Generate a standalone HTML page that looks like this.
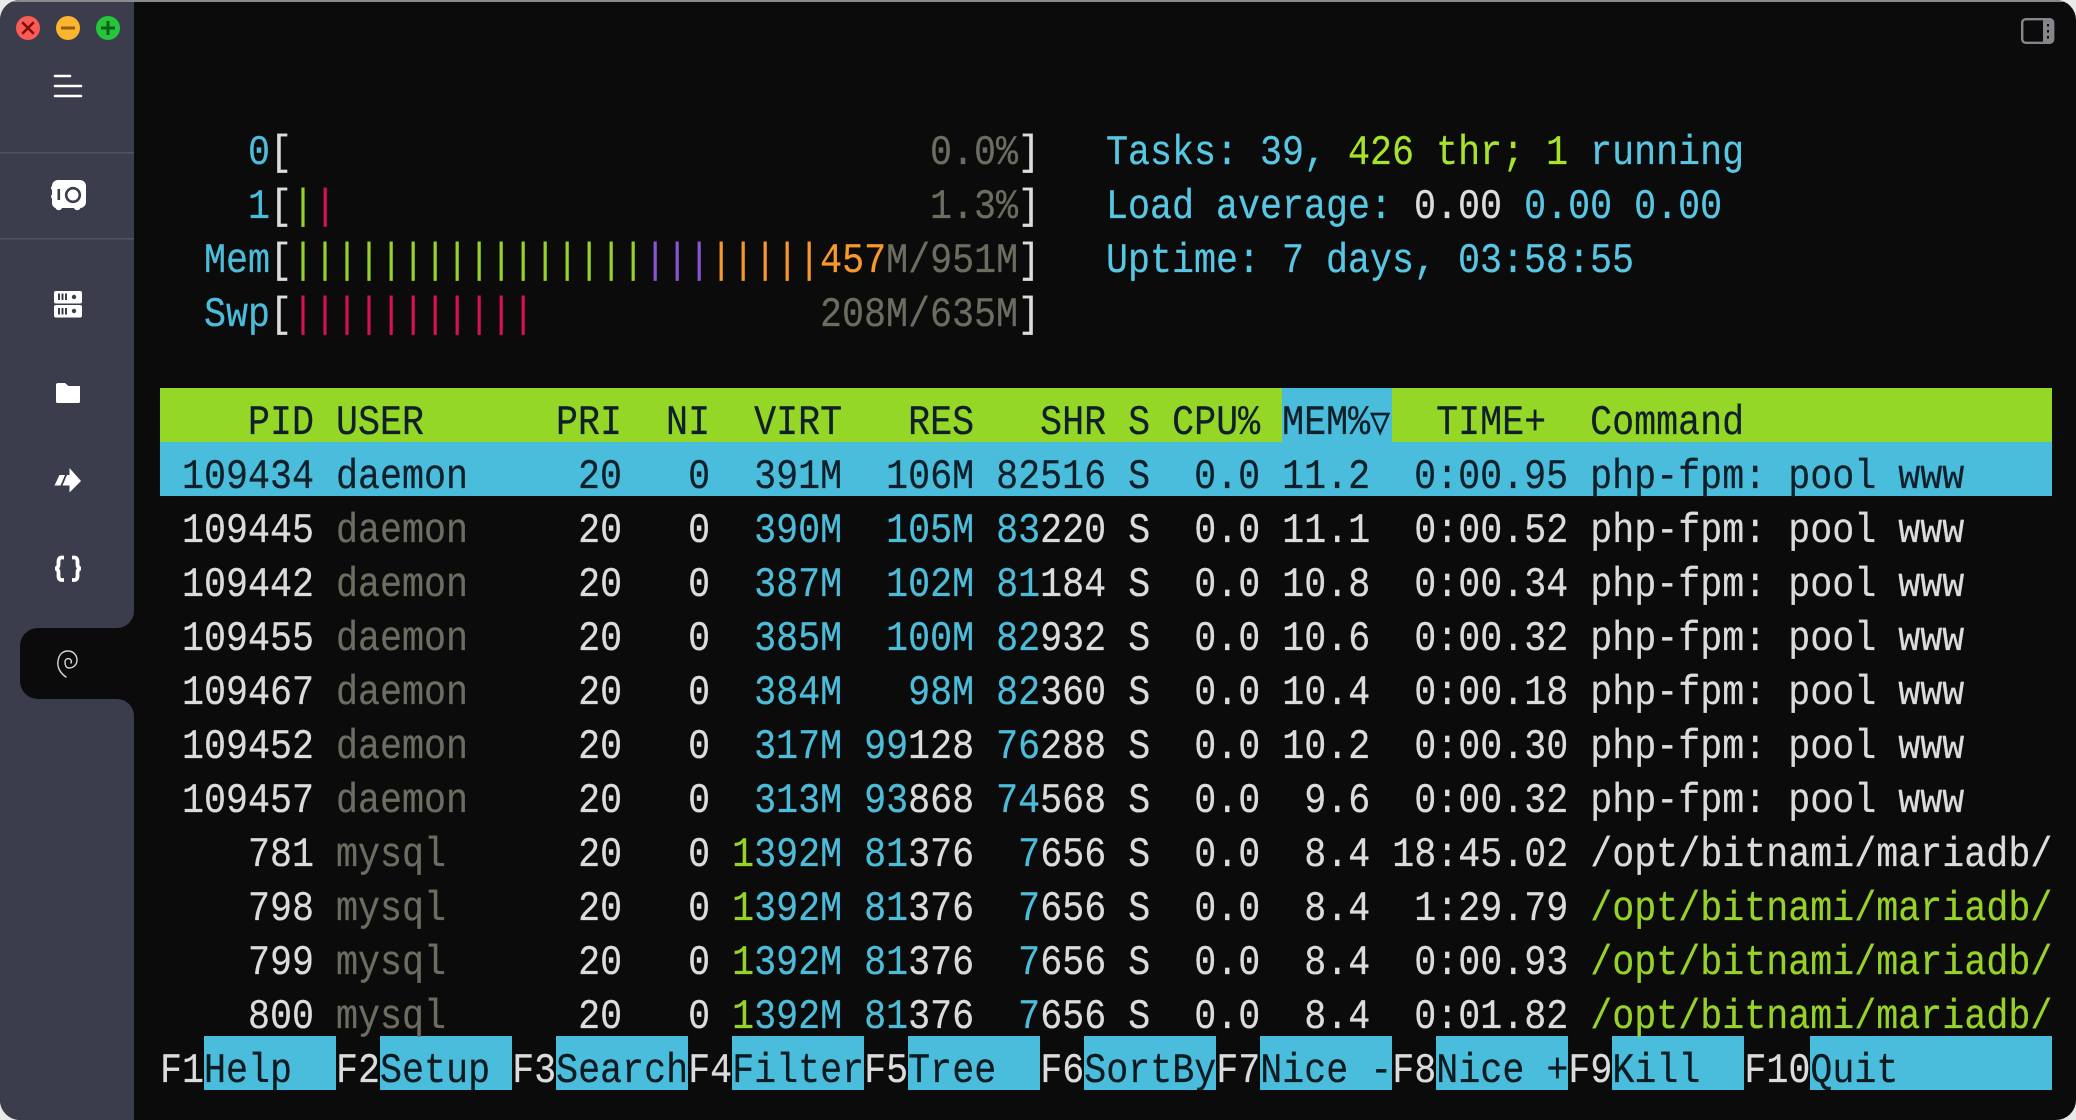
<!DOCTYPE html>
<html>
<head>
<meta charset="utf-8">
<style>
html,body{margin:0;padding:0;width:2076px;height:1120px;overflow:hidden;background:#e9e9ea}
#win{position:absolute;left:0;top:0;width:2076px;height:1120px;border-radius:20px;overflow:hidden;background:#0b0b0c}
#top{position:absolute;left:0;top:0;width:2076px;height:2px;background:#8a8a8c}
svg{position:absolute;left:0;top:0}
.bg{position:absolute}
.l{position:absolute;left:160px;margin-top:1px;white-space:pre;font-family:"Liberation Mono","DejaVu Sans Mono",monospace;font-size:42px;line-height:54px;color:#dcdcdc;transform:scaleX(.87298);transform-origin:0 0;text-rendering:geometricPrecision;-webkit-text-stroke:.25px currentColor}
.b{color:#4dbcd9}.g{color:#97d228}.d{color:#6c6c60}.k{color:#0d1a20}.o{color:#f7982a}.p{color:#8a55d2}.r{color:#d5134f}.c{color:#58c7e3}.y{color:#a8e32c}
.k0,.k0 span{color:#10202a}
.t{display:inline-block;width:25.2px;font-family:"DejaVu Sans Mono",monospace;font-size:38px;line-height:1}
</style>
</head>
<body>
<div id="win">
<!-- backgrounds -->
<div class="bg" style="left:160px;top:388px;width:1892px;height:54px;background:#95d726"></div>
<div class="bg" style="left:1282px;top:388px;width:110px;height:54px;background:#4abddd"></div>
<div class="bg" style="left:160px;top:442px;width:1892px;height:54px;background:#4abddd"></div>
<div class="bg" style="left:204px;top:1036px;width:132px;height:54px;background:#4abddd"></div>
<div class="bg" style="left:380px;top:1036px;width:132px;height:54px;background:#4abddd"></div>
<div class="bg" style="left:556px;top:1036px;width:132px;height:54px;background:#4abddd"></div>
<div class="bg" style="left:732px;top:1036px;width:132px;height:54px;background:#4abddd"></div>
<div class="bg" style="left:908px;top:1036px;width:132px;height:54px;background:#4abddd"></div>
<div class="bg" style="left:1084px;top:1036px;width:132px;height:54px;background:#4abddd"></div>
<div class="bg" style="left:1260px;top:1036px;width:132px;height:54px;background:#4abddd"></div>
<div class="bg" style="left:1436px;top:1036px;width:132px;height:54px;background:#4abddd"></div>
<div class="bg" style="left:1612px;top:1036px;width:132px;height:54px;background:#4abddd"></div>
<div class="bg" style="left:1810px;top:1036px;width:242px;height:54px;background:#4abddd"></div>

<!-- sidebar -->
<svg width="2076" height="1120" viewBox="0 0 2076 1120">
<path d="M0 0H134V611A17 17 0 0 1 117 628H38A18 18 0 0 0 20 646V681A18 18 0 0 0 38 699H117A17 17 0 0 1 134 716V1120H0Z" fill="#3b3c4c"/>
<rect x="0" y="152" width="134" height="1.6" fill="#505161"/>
<rect x="0" y="238" width="134" height="1.6" fill="#505161"/>
<!-- traffic lights -->
<circle cx="28" cy="28" r="12" fill="#fb5b55"/>
<path d="M23 23L33 33M33 23L23 33" stroke="#7d0f0c" stroke-width="2.6" stroke-linecap="round"/>
<circle cx="68" cy="28" r="12" fill="#fcb52e"/>
<path d="M61 28H75" stroke="#96600a" stroke-width="3"/>
<circle cx="108" cy="28" r="12" fill="#25c63c"/>
<path d="M101 28H115M108 21V35" stroke="#0a5f14" stroke-width="3"/>
<!-- menu -->
<path d="M55 76H70M55 86H81M55 96H81" stroke="#fff" stroke-width="2.6" stroke-linecap="round"/>
<!-- safe -->
<path d="M58 180H80A6 6 0 0 1 86 186V202A6 6 0 0 1 80 208H80.500A3.500 3.500 0 0 1 74 208H62A3.500 3.500 0 0 1 55.500 208A5 5 0 0 1 52 203V198.500A2.500 2.500 0 0 1 52 194.500V190A2.500 2.500 0 0 1 52 186A6 6 0 0 1 58 180Z" fill="#fff"/>
<circle cx="73" cy="195" r="6.800" fill="none" stroke="#3b3c4c" stroke-width="2.600"/>
<rect x="57.500" y="189" width="2.600" height="11" fill="#3b3c4c"/>
<!-- server -->
<rect x="54" y="291" width="28" height="12.500" rx="2" fill="#fff"/>
<rect x="54" y="305" width="28" height="12.500" rx="2" fill="#fff"/>
<path d="M59 293.500V300M62.500 293.500V300M66 293.500V300M59 308V314.500M62.500 308V314.500M66 308V314.500" stroke="#3b3c4c" stroke-width="2"/>
<circle cx="74" cy="297" r="2.200" fill="#3b3c4c"/>
<circle cx="74" cy="311" r="2.200" fill="#3b3c4c"/>
<!-- folder -->
<path d="M56 385A2 2 0 0 1 58 383H65L68 385.500V386H80V401.500A1.500 1.500 0 0 1 78.500 403H57.500A1.500 1.500 0 0 1 56 401.500Z" fill="#fff"/>
<!-- arrow -->
<path d="M59.500 475H65L60.500 485.500H54.500Z" fill="#fff"/>
<path d="M67 475H69.500V468L81 481L69.500 492.500V485.500H62.500Z" fill="#fff"/>
<!-- braces -->
<path d="M64 557.500H62C59 557.500 58.500 559.500 58.500 562V564.500C58.500 566.500 57.500 568 55.500 568.500C57.500 569 58.500 570.500 58.500 572.500V575.500C58.500 578 59 580 62 580H64" fill="none" stroke="#fff" stroke-width="3.800"/>
<path d="M72 557.500H74C77 557.500 77.500 559.500 77.500 562V564.500C77.500 566.500 78.500 568 80.500 568.500C78.500 569 77.500 570.500 77.500 572.500V575.500C77.500 578 77 580 74 580H72" fill="none" stroke="#fff" stroke-width="3.800"/>
<!-- debian -->
<path d="M66 677C60 673 57 667 58 661C59 654 63 651 68 651C74 651 77 656 77 660C77 665 73 668 69 668C66 668 65 665 65 662C65 659 68 658 70 659C71 660 72 661 71 663" fill="none" stroke="#d8d8d8" stroke-width="1.400" stroke-linecap="round"/>
<!-- panel icon -->
<rect x="2022.200" y="19.200" width="31" height="23.600" rx="3.500" fill="none" stroke="#85858a" stroke-width="2.400"/>
<rect x="2043" y="19" width="10" height="24" rx="2" fill="#85858a"/>
<path d="M2048 24V26.500M2048 30V32.500M2048 36V38.500" stroke="#0b0b0c" stroke-width="2"/>
</svg>
<div id="top"></div>

<!-- meters -->
<div class="l" style="top:125px">    <span class="b">0</span>[</div>
<div class="l" style="top:125px;left:930px"><span class="d">0.0%</span>]</div>
<div class="l" style="top:179px">    <span class="b">1</span>[<span class="g">|</span><span class="r">|</span></div>
<div class="l" style="top:179px;left:930px"><span class="d">1.3%</span>]</div>
<div class="l" style="top:233px">  <span class="b">Mem</span>[<span class="g">||||||||||||||||</span><span class="p">|||</span><span class="o">|||||457</span><span class="d">M/951M</span>]</div>
<div class="l" style="top:287px">  <span class="b">Swp</span>[<span class="r">|||||||||||</span></div>
<div class="l" style="top:287px;left:820px"><span class="d">208M/635M</span>]</div>

<div class="l c" style="top:125px;left:1106px">Tasks: 39, <span class="y">426</span> <span class="y">thr;</span> <span class="y">1</span> running</div>
<div class="l c" style="top:179px;left:1106px">Load average: <span style="color:#dcdcdc">0.00</span> 0.00 0.00</div>
<div class="l c" style="top:233px;left:1106px">Uptime: 7 days, 03:58:55</div>

<!-- table -->
<div class="l k0" style="top:395px">    PID USER      PRI  NI  VIRT   RES   SHR S CPU% MEM%<span class="t">▽</span>  TIME+  Command</div>
<div class="l k0" style="top:449px"> 109434 daemon     20   0  391M  106M 82516 S  0.0 11.2  0:00.95 php-fpm: pool www</div>
<div class="l" style="top:503px"> 109445 <span class="d">daemon</span>     20   0  <span class="b">390M</span>  <span class="b">105M</span> <span class="b">83</span>220 S  0.0 11.1  0:00.52 php-fpm: pool www</div>
<div class="l" style="top:557px"> 109442 <span class="d">daemon</span>     20   0  <span class="b">387M</span>  <span class="b">102M</span> <span class="b">81</span>184 S  0.0 10.8  0:00.34 php-fpm: pool www</div>
<div class="l" style="top:611px"> 109455 <span class="d">daemon</span>     20   0  <span class="b">385M</span>  <span class="b">100M</span> <span class="b">82</span>932 S  0.0 10.6  0:00.32 php-fpm: pool www</div>
<div class="l" style="top:665px"> 109467 <span class="d">daemon</span>     20   0  <span class="b">384M</span>   <span class="b">98M</span> <span class="b">82</span>360 S  0.0 10.4  0:00.18 php-fpm: pool www</div>
<div class="l" style="top:719px"> 109452 <span class="d">daemon</span>     20   0  <span class="b">317M</span> <span class="b">99</span>128 <span class="b">76</span>288 S  0.0 10.2  0:00.30 php-fpm: pool www</div>
<div class="l" style="top:773px"> 109457 <span class="d">daemon</span>     20   0  <span class="b">313M</span> <span class="b">93</span>868 <span class="b">74</span>568 S  0.0  9.6  0:00.32 php-fpm: pool www</div>
<div class="l" style="top:827px">    781 <span class="d">mysql</span>      20   0 <span class="g">1</span><span class="b">392M</span> <span class="b">81</span>376  <span class="b">7</span>656 S  0.0  8.4 18:45.02 /opt/bitnami/mariadb/</div>
<div class="l" style="top:881px">    798 <span class="d">mysql</span>      20   0 <span class="g">1</span><span class="b">392M</span> <span class="b">81</span>376  <span class="b">7</span>656 S  0.0  8.4  1:29.79 <span class="g">/opt/bitnami/mariadb/</span></div>
<div class="l" style="top:935px">    799 <span class="d">mysql</span>      20   0 <span class="g">1</span><span class="b">392M</span> <span class="b">81</span>376  <span class="b">7</span>656 S  0.0  8.4  0:00.93 <span class="g">/opt/bitnami/mariadb/</span></div>
<div class="l" style="top:989px">    800 <span class="d">mysql</span>      20   0 <span class="g">1</span><span class="b">392M</span> <span class="b">81</span>376  <span class="b">7</span>656 S  0.0  8.4  0:01.82 <span class="g">/opt/bitnami/mariadb/</span></div>
<div class="l" style="top:1043px">F1<span class="k">Help  </span>F2<span class="k">Setup </span>F3<span class="k">Search</span>F4<span class="k">Filter</span>F5<span class="k">Tree  </span>F6<span class="k">SortBy</span>F7<span class="k">Nice -</span>F8<span class="k">Nice +</span>F9<span class="k">Kill  </span>F10<span class="k">Quit</span></div>
</div>
</body>
</html>
